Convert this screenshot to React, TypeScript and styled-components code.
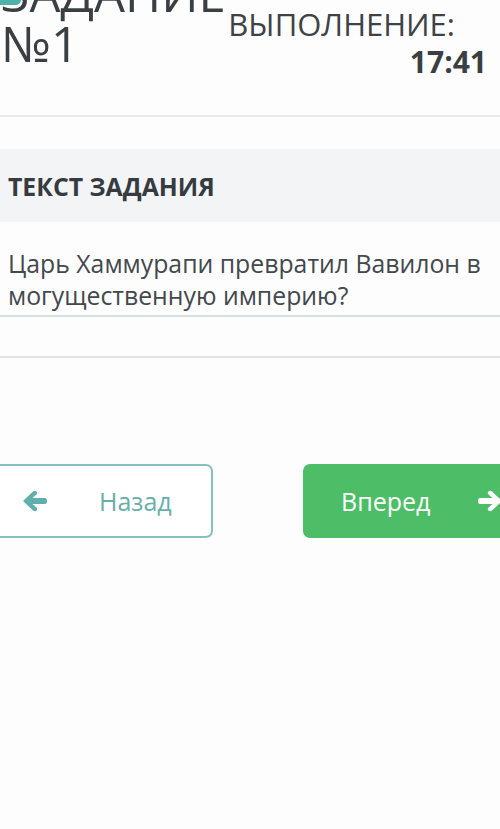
import styled, { createGlobalStyle } from "styled-components";

const GlobalStyle = createGlobalStyle`
  html, body {
    margin: 0;
    padding: 0;
    background: #ffffff;
  }
  body {
    font-family: "Open Sans", "Noto Sans", sans-serif;
    color: #3b4045;
    overflow: hidden;
  }
`;

const Page = styled.div`
  width: 500px;
  height: 829px;
  position: relative;
  overflow: hidden;
  background: #fdfdfd;
`;

const Header = styled.header`
  display: flex;
  justify-content: space-between;
  align-items: flex-start;
  margin-top: -40px;
  height: 157px;
  border-bottom: 2px solid #e8e9ea;
  box-sizing: border-box;
`;

const TitleBlock = styled.div`
  position: relative;
  padding-top: 8px;
  padding-left: 1px;
`;

const Badge = styled.span`
  position: absolute;
  left: -4px;
  top: 30px;
  width: 25px;
  height: 15px;
  border-radius: 5px;
  background: #4db3aa;
`;

const Title = styled.h1`
  position: relative;
  margin: 0;
  font-size: 49px;
  line-height: 50px;
  font-weight: 400;
  color: #3a3f44;
`;

const TimerBlock = styled.div`
  display: flex;
  flex-direction: column;
  align-items: flex-end;
  padding-top: 46px;
  padding-right: 13px;
`;

const TimerLabel = styled.div`
  font-size: 31px;
  line-height: 36px;
  font-weight: 400;
  color: #3d4247;
  margin-right: 32px;
`;

const TimerValue = styled.div`
  font-size: 30px;
  line-height: 40px;
  font-weight: 700;
  color: #3a3f44;
`;

const SectionBand = styled.div`
  margin-top: 32px;
  height: 73px;
  background: #f3f4f6;
  display: flex;
  align-items: center;
  padding-left: 8px;
  font-size: 24.8px;
  font-weight: 700;
  color: #363b40;
`;

const Question = styled.p`
  margin: 0;
  padding: 25px 8px 4px;
  font-size: 24.8px;
  line-height: 32px;
  color: #43484d;
  border-bottom: 2px solid #d3e2e1;
`;

const AnswerArea = styled.div`
  height: 39px;
  border-bottom: 2px solid #e0e2e3;
`;

const NavRow = styled.nav`
  display: flex;
  justify-content: space-between;
  margin-top: 106px;
  margin-left: -12px;
  margin-right: -24px;
`;

const NavButton = styled.button<{ $primary?: boolean }>`
  display: flex;
  align-items: center;
  gap: ${(p) => (p.$primary ? "47px" : "51px")};
  box-sizing: border-box;
  height: 74px;
  width: ${(p) => (p.$primary ? "221px" : "225px")};
  padding: ${(p) => (p.$primary ? "0 0 0 36px" : "0 0 0 32px")};
  border-radius: 7px;
  border: 2px solid ${(p) => (p.$primary ? "#4dbe67" : "#86c0bf")};
  background: ${(p) => (p.$primary ? "#4dbe67" : "#ffffff")};
  color: ${(p) => (p.$primary ? "#ffffff" : "#6aaeab")};
  font-family: "Open Sans", "Noto Sans", sans-serif;
  font-size: 25px;
  font-weight: 400;
  cursor: pointer;
`;

const Arrow = styled.svg<{ $color: string }>`
  width: 26px;
  height: 24px;
  fill: ${(p) => p.$color};
  flex: none;
`;

const LeftArrow = () => (
  <Arrow $color="#5fb0ad" viewBox="0 0 26 24">
    <path d="M1 12 L11 2.5 Q13 1 14.5 2.5 Q16 4 14.5 5.5 L10.5 9 H23 Q25 9 25 12 Q25 15 23 15 H10.5 L14.5 18.5 Q16 20 14.5 21.5 Q13 23 11 21.5 Z" />
  </Arrow>
);

const RightArrow = () => (
  <Arrow $color="#ffffff" viewBox="0 0 26 24">
    <path d="M25 12 L15 2.5 Q13 1 11.5 2.5 Q10 4 11.5 5.5 L15.5 9 H3 Q1 9 1 12 Q1 15 3 15 H15.5 L11.5 18.5 Q10 20 11.5 21.5 Q13 23 15 21.5 Z" />
  </Arrow>
);

const App = () => {
  return (
    <Page>
      <GlobalStyle />
      <Header>
        <TitleBlock>
          <Badge />
          <Title>
            ЗАДАНИЕ
            <br />
            №1
          </Title>
        </TitleBlock>
        <TimerBlock>
          <TimerLabel>ВЫПОЛНЕНИЕ:</TimerLabel>
          <TimerValue>17:41</TimerValue>
        </TimerBlock>
      </Header>
      <SectionBand>ТЕКСТ ЗАДАНИЯ</SectionBand>
      <Question>Царь Хаммурапи превратил Вавилон в могущественную империю?</Question>
      <AnswerArea />
      <NavRow>
        <NavButton>
          <LeftArrow />
          Назад
        </NavButton>
        <NavButton $primary>
          Вперед
          <RightArrow />
        </NavButton>
      </NavRow>
    </Page>
  );
};

export default App;
